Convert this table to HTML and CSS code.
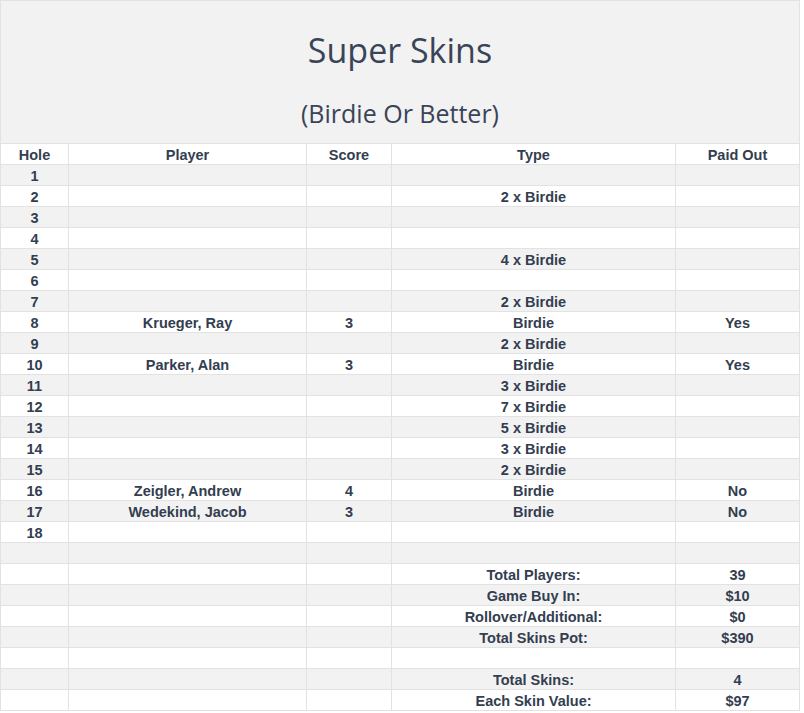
FILE: index.html
```html
<!DOCTYPE html>
<html>
<head>
<meta charset="utf-8">
<link rel="stylesheet" href="styles.css">
</head>
<body>
<div class="page">
  <div class="banner">
    <h1 class="title">Super Skins</h1>
    <h2 class="subtitle">(Birdie Or Better)</h2>
  </div>
  <table class="skins">
    <colgroup>
      <col class="c-hole"><col class="c-player"><col class="c-score"><col class="c-type"><col class="c-paid">
    </colgroup>
    <thead>
      <tr><th>Hole</th><th>Player</th><th>Score</th><th>Type</th><th>Paid Out</th></tr>
    </thead>
    <tbody>
      <tr><td>1</td><td></td><td></td><td></td><td></td></tr>
      <tr><td>2</td><td></td><td></td><td>2 x Birdie</td><td></td></tr>
      <tr><td>3</td><td></td><td></td><td></td><td></td></tr>
      <tr><td>4</td><td></td><td></td><td></td><td></td></tr>
      <tr><td>5</td><td></td><td></td><td>4 x Birdie</td><td></td></tr>
      <tr><td>6</td><td></td><td></td><td></td><td></td></tr>
      <tr><td>7</td><td></td><td></td><td>2 x Birdie</td><td></td></tr>
      <tr><td>8</td><td>Krueger, Ray</td><td>3</td><td>Birdie</td><td>Yes</td></tr>
      <tr><td>9</td><td></td><td></td><td>2 x Birdie</td><td></td></tr>
      <tr><td>10</td><td>Parker, Alan</td><td>3</td><td>Birdie</td><td>Yes</td></tr>
      <tr><td>11</td><td></td><td></td><td>3 x Birdie</td><td></td></tr>
      <tr><td>12</td><td></td><td></td><td>7 x Birdie</td><td></td></tr>
      <tr><td>13</td><td></td><td></td><td>5 x Birdie</td><td></td></tr>
      <tr><td>14</td><td></td><td></td><td>3 x Birdie</td><td></td></tr>
      <tr><td>15</td><td></td><td></td><td>2 x Birdie</td><td></td></tr>
      <tr><td>16</td><td>Zeigler, Andrew</td><td>4</td><td>Birdie</td><td>No</td></tr>
      <tr><td>17</td><td>Wedekind, Jacob</td><td>3</td><td>Birdie</td><td>No</td></tr>
      <tr><td>18</td><td></td><td></td><td></td><td></td></tr>
      <tr><td></td><td></td><td></td><td></td><td></td></tr>
      <tr><td></td><td></td><td></td><td>Total Players:</td><td>39</td></tr>
      <tr><td></td><td></td><td></td><td>Game Buy In:</td><td>$10</td></tr>
      <tr><td></td><td></td><td></td><td>Rollover/Additional:</td><td>$0</td></tr>
      <tr><td></td><td></td><td></td><td>Total Skins Pot:</td><td>$390</td></tr>
      <tr><td></td><td></td><td></td><td></td><td></td></tr>
      <tr><td></td><td></td><td></td><td>Total Skins:</td><td>4</td></tr>
      <tr><td></td><td></td><td></td><td>Each Skin Value:</td><td>$97</td></tr>
    </tbody>
  </table>
</div>
</body>
</html>
```

FILE: styles.css
```css
html, body {
  margin: 0;
  padding: 0;
  background: #ffffff;
}

.page {
  width: 800px;
}

.banner {
  box-sizing: border-box;
  width: 800px;
  height: 143px;
  background: #f2f2f2;
  border: 1px solid #e2e2e2;
  border-bottom: none;
  text-align: center;
  color: #3a4457;
  font-family: "Open Sans", "Noto Sans", sans-serif;
  padding-top: 26px;
}

.title {
  margin: 0;
  font-size: 34px;
  font-weight: 400;
  line-height: 46px;
}

.subtitle {
  margin: 24px 0 0;
  font-size: 25px;
  font-weight: 400;
  line-height: 32px;
}

.skins {
  width: 799px;
  table-layout: fixed;
  border-collapse: collapse;
  font-family: "Liberation Sans", Arial, sans-serif;
  font-weight: 700;
  font-size: 14.5px;
  color: #333e50;
}

.c-hole { width: 68px; }
.c-player { width: 238px; }
.c-score { width: 85px; }
.c-type { width: 284px; }
.c-paid { width: 124px; }

.skins th,
.skins td {
  box-sizing: border-box;
  border: 1px solid #e2e2e2;
  height: 21px;
  padding: 1px 0 0;
  line-height: 18px;
  text-align: center;
  vertical-align: middle;
  white-space: nowrap;
}

.skins th {
  font-weight: 700;
  background: #ffffff;
}

.skins tbody tr:nth-child(odd) td {
  background: #f2f2f2;
}
```
